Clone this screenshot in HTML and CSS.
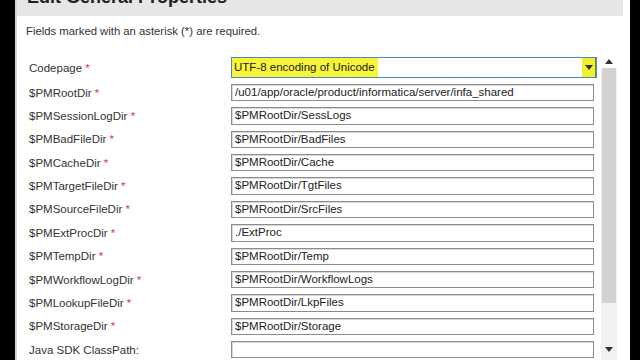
FILE: index.html
```html
<!DOCTYPE html>
<html>
<head>
<meta charset="utf-8">
<link rel="stylesheet" href="styles.css">
</head>
<body>
<div class="dialog">
  <div class="titlebar">
    <span class="title">Edit General Properties</span>
    <span class="close">×</span>
  </div>
  <p class="note">Fields marked with an asterisk (*) are required.</p>
  <div class="content">
    <div class="form">
      <div class="row row-first">
        <label class="label">Codepage <span class="req">*</span></label>
        <div class="select"><span class="hl">UTF-8 encoding of Unicode</span><span class="arrow"><svg width="8" height="5" viewBox="0 0 8 5"><path d="M0 0H8L4 5Z" fill="#333"/></svg></span></div>
      </div>
      <div class="row"><label class="label">$PMRootDir <span class="req">*</span></label><div class="input">/u01/app/oracle/product/informatica/server/infa_shared</div></div>
      <div class="row"><label class="label">$PMSessionLogDir <span class="req">*</span></label><div class="input">$PMRootDir/SessLogs</div></div>
      <div class="row"><label class="label">$PMBadFileDir <span class="req">*</span></label><div class="input">$PMRootDir/BadFiles</div></div>
      <div class="row"><label class="label">$PMCacheDir <span class="req">*</span></label><div class="input">$PMRootDir/Cache</div></div>
      <div class="row"><label class="label">$PMTargetFileDir <span class="req">*</span></label><div class="input">$PMRootDir/TgtFiles</div></div>
      <div class="row"><label class="label">$PMSourceFileDir <span class="req">*</span></label><div class="input">$PMRootDir/SrcFiles</div></div>
      <div class="row"><label class="label">$PMExtProcDir <span class="req">*</span></label><div class="input">./ExtProc</div></div>
      <div class="row"><label class="label">$PMTempDir <span class="req">*</span></label><div class="input">$PMRootDir/Temp</div></div>
      <div class="row"><label class="label">$PMWorkflowLogDir <span class="req">*</span></label><div class="input">$PMRootDir/WorkflowLogs</div></div>
      <div class="row"><label class="label">$PMLookupFileDir <span class="req">*</span></label><div class="input">$PMRootDir/LkpFiles</div></div>
      <div class="row"><label class="label">$PMStorageDir <span class="req">*</span></label><div class="input">$PMRootDir/Storage</div></div>
      <div class="row"><label class="label">Java SDK ClassPath:</label><div class="input"></div></div>
    </div>
    <div class="scrollbar">
      <div class="sb-btn"><svg width="8" height="5" viewBox="0 0 8 5"><path d="M0 5H8L4 0Z" fill="#333"/></svg></div>
      <div class="sb-track"><div class="sb-thumb"></div></div>
      <div class="sb-btn sb-down"><svg width="8" height="5" viewBox="0 0 8 5"><path d="M0 0H8L4 5Z" fill="#333"/></svg></div>
    </div>
  </div>
</div>
</body>
</html>
```

FILE: styles.css
```css
html, body {
  margin: 0;
  padding: 0;
  background: #000;
  height: 360px;
  overflow: hidden;
  font-family: "Liberation Sans", Arial, sans-serif;
}

.dialog {
  margin-left: 15px;
  width: 615px;
  height: 360px;
  background: #fff;
  border-left: 2px solid #d6d6d6;
  box-sizing: border-box;
  padding-right: 7px;
  overflow: hidden;
}

.titlebar {
  height: 16px;
  background: #e6e6e6;
  overflow: hidden;
  display: flex;
  justify-content: space-between;
}

.title {
  font-size: 18px;
  font-weight: bold;
  color: #222;
  line-height: 20px;
  margin: -13px 0 0 10px;
}

.close {
  font-size: 18px;
  color: #555;
  line-height: 20px;
  margin: -15px 12px 0 0;
}

.note {
  margin: 8px 0 0 9px;
  font-size: 11.3px;
  line-height: 14px;
  color: #333;
}

.content {
  display: flex;
  margin-top: 17px;
  height: 305px;
}

.form {
  width: 580px;
  padding: 2px 0 0 12px;
  box-sizing: border-box;
}

.row {
  display: flex;
  align-items: center;
  height: 17.36px;
  margin-bottom: 6px;
}

.row-first {
  height: 21px;
  margin-bottom: 6px;
}

.label {
  width: 202px;
  flex: none;
  font-size: 11.5px;
  color: #333;
}

.req {
  color: #d04040;
}

.input {
  width: 363px;
  height: 17.36px;
  box-sizing: border-box;
  border: 1px solid #8c8c8c;
  box-shadow: inset 1px 1px 0 #d8d8d8;
  font-size: 11.5px;
  color: #222;
  line-height: 15px;
  padding-left: 3px;
  white-space: nowrap;
  overflow: hidden;
}

.select {
  width: 366px;
  height: 21px;
  box-sizing: border-box;
  border: 1px solid #4a88c4;
  display: flex;
  justify-content: space-between;
  align-items: stretch;
  font-size: 11.5px;
  color: #222;
}

.hl {
  background: #f7f43a;
  padding: 0 3px 0 2px;
  line-height: 19px;
}

.arrow {
  width: 13px;
  background: #f2ef2e;
  border-right: 1px solid #6a8a3a;
  display: flex;
  align-items: center;
  justify-content: center;
}

.scrollbar {
  width: 16px;
  margin-left: 4px;
  background: #f2f2f2;
  display: flex;
  flex-direction: column;
}

.sb-btn {
  height: 13px;
  display: flex;
  align-items: center;
  justify-content: center;
  background: #fff;
}

.sb-track {
  flex: 1;
  padding: 0 1px;
}

.sb-thumb {
  height: 235px;
  background: #d2d2d2;
}

.sb-down {
  height: 16px;
  background: #f2f2f2;
  align-items: flex-start;
  padding-top: 3px;
  box-sizing: border-box;
}
```
